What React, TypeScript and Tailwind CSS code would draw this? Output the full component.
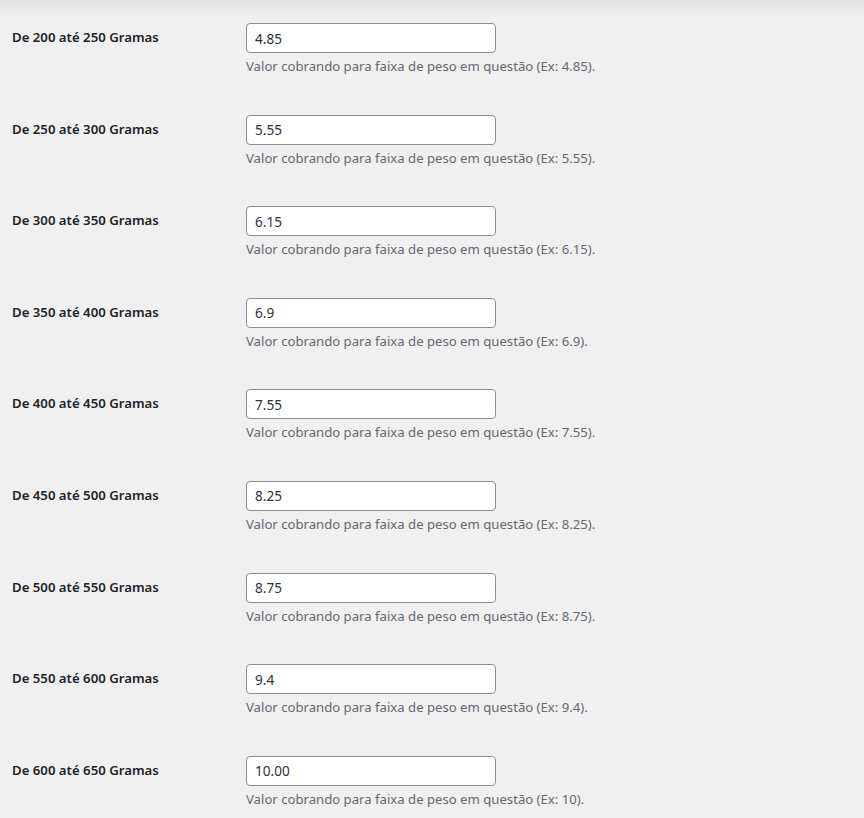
import React from 'react'

const rows = [
  { from: 200, to: 250, value: '4.85', ex: '4.85' },
  { from: 250, to: 300, value: '5.55', ex: '5.55' },
  { from: 300, to: 350, value: '6.15', ex: '6.15' },
  { from: 350, to: 400, value: '6.9', ex: '6.9' },
  { from: 400, to: 450, value: '7.55', ex: '7.55' },
  { from: 450, to: 500, value: '8.25', ex: '8.25' },
  { from: 500, to: 550, value: '8.75', ex: '8.75' },
  { from: 550, to: 600, value: '9.4', ex: '9.4' },
  { from: 600, to: 650, value: '10.00', ex: '10' },
]

function WeightRow({ from, to, value, ex }: { from: number; to: number; value: string; ex: string }) {
  return (
    <div className="flex h-[91.6px] pt-[15px]">
      <div className="w-[246px] shrink-0 pl-3 pt-[6px] text-[13.2px] font-semibold leading-[1.3] text-[#1d2327]">
        De {from} até {to} Gramas
      </div>
      <div>
        <input
          type="text"
          defaultValue={value}
          className="block h-[30px] w-[250px] rounded-[4px] border border-[#8c8f94] bg-white px-2 text-[13.6px] text-[#2c3338] outline-none"
        />
        <p className="mt-[4px] text-[13.15px] leading-[1.5] text-[#646970]">
          Valor cobrando para faixa de peso em questão (Ex: {ex}).
        </p>
      </div>
    </div>
  )
}

export default function App() {
  return (
    <div
      className="min-h-[818px] w-full bg-[#f0f0f1] pt-[8px]"
      style={{ fontFamily: '"Segoe UI", "Noto Sans", Roboto, sans-serif' }}
    >
      <div className="pointer-events-none fixed inset-x-0 top-0 h-[16px] bg-gradient-to-b from-[#e2e2e3] to-[#f0f0f1]" />
      {rows.map((r) => (
        <WeightRow key={r.from} {...r} />
      ))}
    </div>
  )
}
